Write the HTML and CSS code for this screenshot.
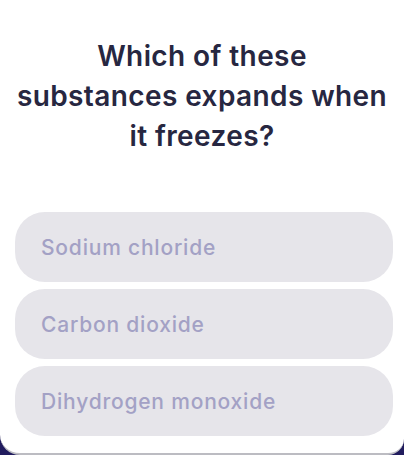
FILE: index.html
```html
<!DOCTYPE html>
<html>
<head>
<meta charset="utf-8">
<link rel="stylesheet" href="styles.css">
</head>
<body>
<div class="card">
  <h1 class="question">Which of these<br>substances expands when<br>it freezes?</h1>
  <div class="options">
    <div class="option">Sodium chloride</div>
    <div class="option">Carbon dioxide</div>
    <div class="option">Dihydrogen monoxide</div>
  </div>
</div>
</body>
</html>
```
FILE: styles.css
```css
html, body {
  margin: 0;
  padding: 0;
  width: 404px;
  height: 455px;
  overflow: hidden;
  background: #211c5e;
}
.card {
  box-sizing: border-box;
  height: 455px;
  background: #ffffff;
  border-bottom: 2px solid #bcbcc2;
  border-radius: 0 0 16px 20px;
  padding-top: 36px;
  display: flex;
  flex-direction: column;
}
.question {
  margin: 0;
  font-family: Inter, "Open Sans", sans-serif;
  font-weight: 600;
  font-size: 28px;
  letter-spacing: 0.4px;
  line-height: 40px;
  color: #272741;
  text-align: center;
}
.options {
  margin-top: 56px;
  padding: 0 11px 0 15px;
  display: flex;
  flex-direction: column;
  gap: 7px;
}
.option {
  height: 70px;
  border-radius: 30px;
  background: #e6e5ea;
  display: flex;
  align-items: center;
  padding-left: 26px;
  font-family: Inter, "Open Sans", sans-serif;
  font-size: 21px;
  font-weight: 500;
  letter-spacing: 0.8px;
  color: #a3a1c5;
}
```
